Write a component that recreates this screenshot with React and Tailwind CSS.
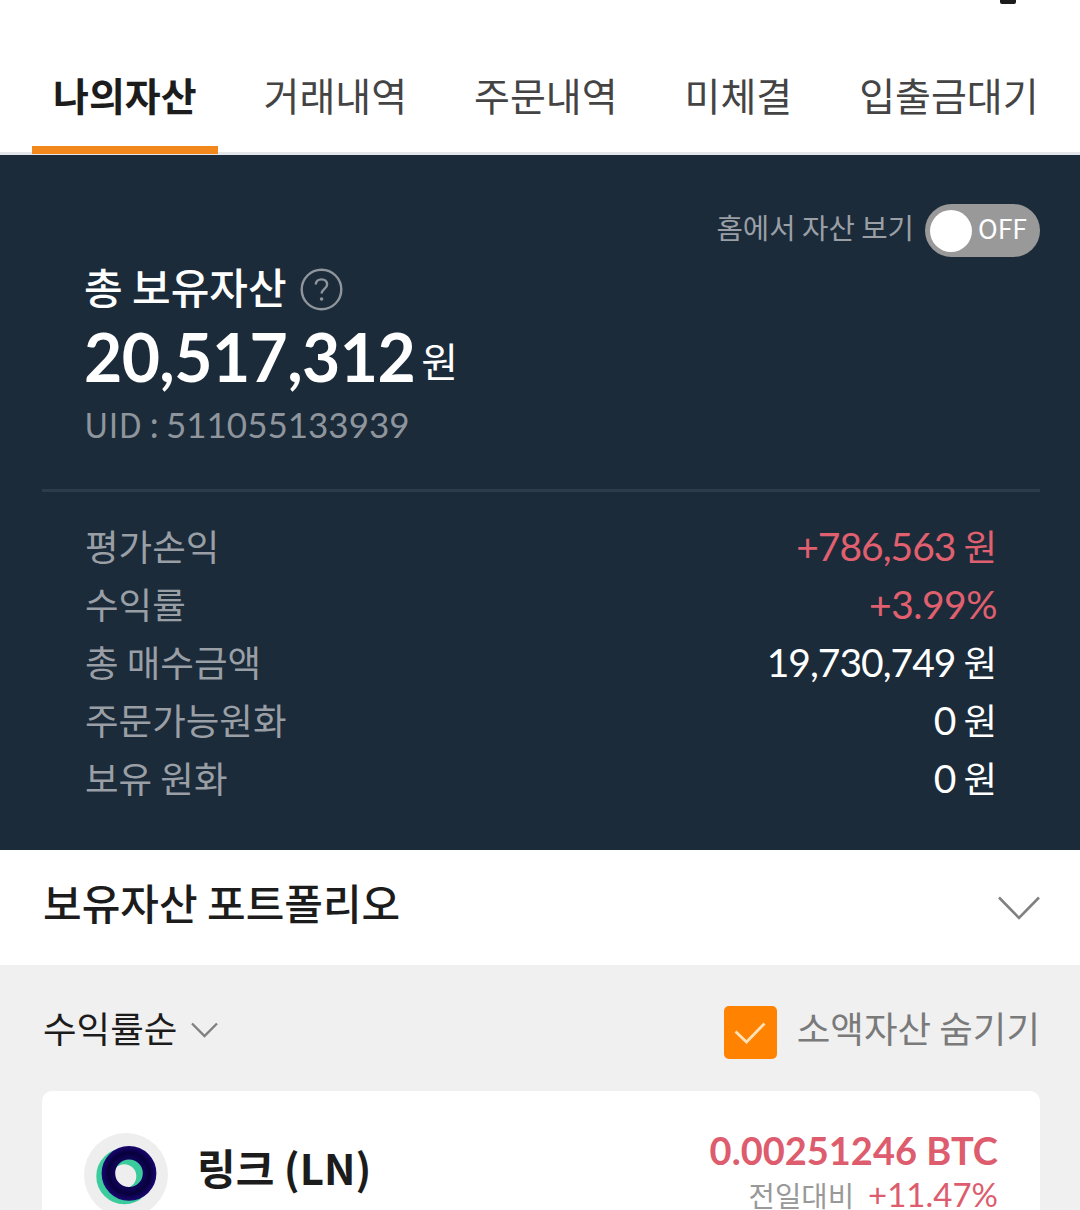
const tabs = ["나의자산", "거래내역", "주문내역", "미체결", "입출금대기"];

const summary = [
  { label: "평가손익", value: "+786,563", unit: "원", up: true },
  { label: "수익률", value: "+3.99%", up: true },
  { label: "총 매수금액", value: "19,730,749", unit: "원" },
  { label: "주문가능원화", value: "0", unit: "원" },
  { label: "보유 원화", value: "0", unit: "원" },
];

function Tabs() {
  return (
    <header className="h-[155px] bg-white border-b-[3px] border-[#e3e7eb] flex flex-col justify-between">
      <div className="h-[5px] flex justify-end pr-16">
        <span className="w-4 h-1 rounded-b-xs bg-[#1c1c1c]"></span>
      </div>
      <nav className="flex gap-[25px] pl-8 h-[108px] -mb-0.5">
        {tabs.map((tab, i) => (
          <div
            key={tab}
            className={
              i === 0
                ? "shrink-0 px-[21px] border-b-8 border-[#f2871c] font-bold text-[#1c1c1c]"
                : "shrink-0 px-[21px] text-[#444444]"
            }
          >
            <span className="block text-[39px] leading-[96px] whitespace-nowrap">
              {tab}
            </span>
          </div>
        ))}
      </nav>
    </header>
  );
}

function HomeToggle() {
  return (
    <div className="flex justify-end items-center gap-[11px] h-[53px]">
      <span className="text-[28.7px] leading-[48px] pb-[7px] text-[#9a9fa5]">
        홈에서 자산 보기
      </span>
      <div className="w-[115px] h-[53px] rounded-full bg-[#999999] flex items-center pl-[5px] gap-[6px]">
        <span className="size-[42px] rounded-full bg-white"></span>
        <span className="text-[26.5px] leading-[50px] pb-[5px] text-white">
          OFF
        </span>
      </div>
    </div>
  );
}

function AssetPanel() {
  return (
    <section className="h-[695px] bg-[#1b2b3a] px-[42px] pr-10 pt-[49px]">
      <HomeToggle />
      <div className="pl-[42px]">
        <div className="flex items-center gap-[13px] h-[60px]">
          <h1 className="text-[42px] leading-[60px] pb-[3px] font-medium text-white">
            총 보유자산
          </h1>
          <svg className="size-[43px] mt-1" viewBox="0 0 43 43" fill="none">
            <circle cx="21.5" cy="21.5" r="19.8" stroke="#8f959c" strokeWidth="2.4" />
            <path
              d="M15.8 16.6c0-3.3 2.5-5.2 5.7-5.2s5.6 1.9 5.6 5c0 4.4-5.5 4.5-5.5 9.2"
              stroke="#8f959c"
              strokeWidth="2.4"
            />
            <circle cx="21.6" cy="31" r="1.8" fill="#8f959c" />
          </svg>
        </div>
        <div className="flex items-start gap-1.5 h-[80px] text-white">
          <strong className="font-['Lato',sans-serif] text-[66px] leading-[80px] font-bold tracking-[-0.6px]">
            20,517,312
          </strong>
          <span className="text-[40px] leading-[60px] mt-[13px]">원</span>
        </div>
        <p className="flex items-baseline gap-[7px] h-[56px] text-[#8f959c]">
          <span className="text-[34px] leading-[54px]">UID :</span>
          <span className="font-['Lato',sans-serif] text-[35px] leading-[54px]">
            511055133939
          </span>
        </p>
      </div>
      <hr className="mt-[36px] border-t-[3px] border-[#2d3c4b]" />
      <dl className="mt-[25px] pl-[43px] pr-[43px]">
        {summary.map((row) => (
          <div key={row.label} className="flex justify-between h-[58px]">
            <dt className="text-[36.5px] leading-[58px] text-[#9a9fa5]">
              {row.label}
            </dt>
            <dd
              className={
                row.up
                  ? "flex items-baseline gap-2 text-[#e0606f]"
                  : "flex items-baseline gap-2 text-white"
              }
            >
              <span
                className={
                  row.unit
                    ? "font-['Lato',sans-serif] text-[39px] leading-[58px] tracking-[-1px]"
                    : "font-['Lato',sans-serif] text-[39px] leading-[58px] tracking-[-0.5px]"
                }
              >
                {row.value}
              </span>
              {row.unit && (
                <span className="text-[36.5px] leading-[58px]">{row.unit}</span>
              )}
            </dd>
          </div>
        ))}
      </dl>
    </section>
  );
}

function Portfolio() {
  return (
    <section className="h-[115px] bg-white flex items-center justify-between pl-[43px] pr-10">
      <h2 className="text-[42px] leading-[60px] pb-[11px] font-medium text-[#1c1c1c]">
        보유자산 포트폴리오
      </h2>
      <svg className="w-[42px] h-6" viewBox="0 0 42 24" fill="none">
        <path d="M1 1.5L21 22L41 1.5" stroke="#808080" strokeWidth="2.6" />
      </svg>
    </section>
  );
}

function FilterBar() {
  return (
    <div className="h-[126px] pt-[41px] flex items-start justify-between pl-[43px] pr-10">
      <div className="flex items-center gap-[14px] h-[53px]">
        <span className="text-[36.5px] leading-[53px] pb-[11px] text-[#1c1c1c]">
          수익률순
        </span>
        <svg className="w-[27px] h-4 mb-1.5" viewBox="0 0 27 16" fill="none">
          <path d="M1 1.5L13.5 14L26 1.5" stroke="#808080" strokeWidth="2.4" />
        </svg>
      </div>
      <div className="flex items-center gap-5 h-[53px]">
        <span className="size-[53px] rounded-[5px] bg-[#ff8200] flex items-center justify-center">
          <svg className="w-8 h-[22px]" viewBox="0 0 32 22" fill="none">
            <path d="M1.5 9.5L12.5 20L30.5 1.5" stroke="#ffe2b8" strokeWidth="2.8" />
          </svg>
        </span>
        <span className="text-[36.5px] leading-[53px] pb-2.5 text-[#7a7a7a]">
          소액자산 숨기기
        </span>
      </div>
    </div>
  );
}

function CoinCard() {
  return (
    <article className="ml-[42px] mr-10 h-[240px] rounded-[10px] bg-white pl-[42px] pr-[42px] pt-[34px] flex justify-between">
      <div className="flex items-start gap-[29px]">
        <svg className="size-[84px] mt-2" viewBox="0 0 84 84" fill="none">
          <defs>
            <radialGradient id="ring" gradientUnits="userSpaceOnUse" cx="45" cy="40.3" r="27.5">
              <stop offset="0.5" stopColor="#12045c" />
              <stop offset="0.75" stopColor="#07003c" />
              <stop offset="1" stopColor="#1a0673" />
            </radialGradient>
          </defs>
          <circle cx="42" cy="42" r="42" fill="#efeeee" />
          <circle cx="40.3" cy="43.2" r="20" stroke="#3ccb9c" strokeWidth="16" />
          <circle cx="45" cy="40.3" r="20.6" stroke="url(#ring)" strokeWidth="13.6" />
        </svg>
        <h3 className="text-[42px] leading-[60px] mt-[12px] font-bold text-[#1c1c1c]">
          링크 (LN)
        </h3>
      </div>
      <div className="flex flex-col items-end">
        <strong className="font-['Lato',sans-serif] text-[38px] leading-[50px] font-bold text-[#dd5c6d]">
          0.00251246 BTC
        </strong>
        <p className="flex items-baseline gap-3.5 -mt-px">
          <span className="text-[28.7px] leading-[40px] text-[#999999]">
            전일대비
          </span>
          <span className="font-['Lato',sans-serif] text-[33px] leading-[40px] text-[#dd5c6d]">
            +11.47%
          </span>
        </p>
      </div>
    </article>
  );
}

export default function App() {
  return (
    <main className="w-[1080px] h-[1210px] overflow-hidden bg-[#f0f0f0] font-['Noto_Sans_CJK_KR',sans-serif]">
      <Tabs />
      <AssetPanel />
      <Portfolio />
      <FilterBar />
      <CoinCard />
    </main>
  );
}
